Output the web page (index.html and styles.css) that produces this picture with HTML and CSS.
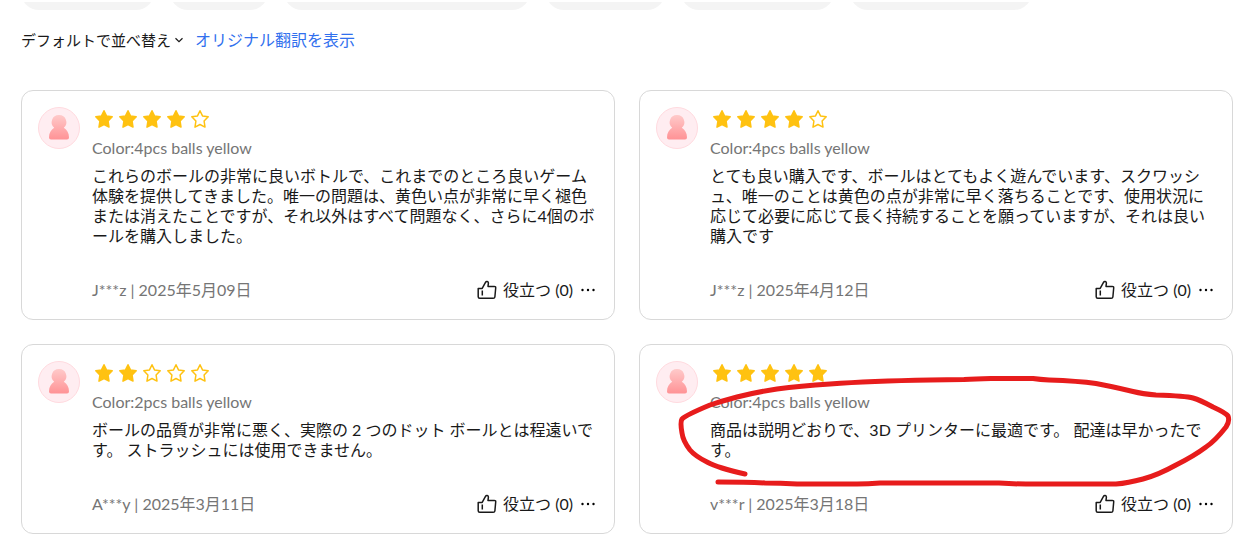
FILE: index.html
```html
<!DOCTYPE html>
<html lang="ja">
<head>
<meta charset="utf-8">
<meta name="viewport" content="width=device-width, initial-scale=1">
<title>レビュー</title>
<link rel="stylesheet" href="styles.css">
</head>
<body>
<svg class="symbols" width="0" height="0">
  <defs>
    <linearGradient id="person-fill" x1="0" y1="0" x2="0" y2="1">
      <stop offset="0" stop-color="#ffcaca"/>
      <stop offset="1" stop-color="#ff9295"/>
    </linearGradient>
    <symbol id="avatar" viewBox="0 0 42 42">
      <circle cx="21" cy="21" r="20.5" fill="#ffedf1" stroke="#ffdadf"/>
      <path d="M21 8a7.200 7.200 0 0 1 4.800 12.700C29 22.500 31 26 31 30.500Q31 32.600 29 32.600H13Q11 32.600 11 30.500C11 26 13 22.500 16.200 20.700A7.200 7.200 0 0 1 21 8z" fill="url(#person-fill)"/>
    </symbol>
    <symbol id="star" viewBox="0 0 24 24">
      <path d="M12 3.700l2.500 5.200 5.700.9-4.100 4.200.9 6.100L12 17.500l-5 2.600.9-6.100L3.800 9.800l5.700-.9z" stroke-width="1.500" stroke-linejoin="round" stroke="#ffc211"/>
    </symbol>
    <symbol id="thumb" viewBox="0 0 20 20">
      <path d="M1.200 8.400H5.200L8.500 2.400C9.300.9 11.400 1.400 11.400 3.100L11 6.400H17.300Q18.900 6.400 18.700 8L17.900 16.800Q17.700 18.300 16.200 18.300H2.700Q1.200 18.300 1.200 16.800ZM5.300 10.400V15.600" fill="none" stroke="#191919" stroke-width="1.500" stroke-linejoin="round"/>
    </symbol>
    <symbol id="dots" viewBox="0 0 16 16">
      <circle cx="2.500" cy="8" r="1.200"/><circle cx="8" cy="8" r="1.200"/><circle cx="13.500" cy="8" r="1.200"/>
    </symbol>
  </defs>
</svg>

<div class="chips">
  <span class="chip chip-a"></span>
  <span class="chip chip-b"></span>
  <span class="chip chip-c"></span>
  <span class="chip chip-d"></span>
  <span class="chip chip-e"></span>
  <span class="chip chip-f"></span>
</div>

<main class="reviews">
  <div class="toolbar">
    <button class="sort" type="button">デフォルトで並べ替え
      <svg class="chevron" viewBox="0 0 10 10"><path d="M1.500 3.300L5 6.700l3.500-3.400" fill="none" stroke="#191919" stroke-width="1.200"/></svg>
    </button>
    <a class="original" href="#">オリジナル翻訳を表示</a>
  </div>

  <div class="grid">
    <article class="card">
      <svg class="avatar"><use href="#avatar"/></svg>
      <div class="content">
        <div class="stars">
          <svg class="star on"><use href="#star"/></svg><svg class="star on"><use href="#star"/></svg><svg class="star on"><use href="#star"/></svg><svg class="star on"><use href="#star"/></svg><svg class="star"><use href="#star"/></svg>
        </div>
        <div class="variant">Color:4pcs balls yellow</div>
        <p class="text">これらのボールの非常に良いボトルで、これまでのところ良いゲーム体験を提供してきました。唯一の問題は、黄色い点が非常に早く褪色または消えたことですが、それ以外はすべて問題なく、さらに4個のボールを購入しました。</p>
        <footer class="foot">
          <span class="author">J***z | 2025年5月09日</span>
          <button class="helpful" type="button"><svg class="thumb"><use href="#thumb"/></svg>役立つ (0)</button>
          <button class="more" type="button"><svg class="dots"><use href="#dots"/></svg></button>
        </footer>
      </div>
    </article>

    <article class="card">
      <svg class="avatar"><use href="#avatar"/></svg>
      <div class="content">
        <div class="stars">
          <svg class="star on"><use href="#star"/></svg><svg class="star on"><use href="#star"/></svg><svg class="star on"><use href="#star"/></svg><svg class="star on"><use href="#star"/></svg><svg class="star"><use href="#star"/></svg>
        </div>
        <div class="variant">Color:4pcs balls yellow</div>
        <p class="text">とても良い購入です、ボールはとてもよく遊んでいます、スクワッシュ、唯一のことは黄色の点が非常に早く落ちることです、使用状況に応じて必要に応じて長く持続することを願っていますが、それは良い購入です</p>
        <footer class="foot">
          <span class="author">J***z | 2025年4月12日</span>
          <button class="helpful" type="button"><svg class="thumb"><use href="#thumb"/></svg>役立つ (0)</button>
          <button class="more" type="button"><svg class="dots"><use href="#dots"/></svg></button>
        </footer>
      </div>
    </article>

    <article class="card">
      <svg class="avatar"><use href="#avatar"/></svg>
      <div class="content">
        <div class="stars">
          <svg class="star on"><use href="#star"/></svg><svg class="star on"><use href="#star"/></svg><svg class="star"><use href="#star"/></svg><svg class="star"><use href="#star"/></svg><svg class="star"><use href="#star"/></svg>
        </div>
        <div class="variant">Color:2pcs balls yellow</div>
        <p class="text">ボールの品質が非常に悪く、実際の 2 つのドット ボールとは程遠いです。 ストラッシュには使用できません。</p>
        <footer class="foot">
          <span class="author">A***y | 2025年3月11日</span>
          <button class="helpful" type="button"><svg class="thumb"><use href="#thumb"/></svg>役立つ (0)</button>
          <button class="more" type="button"><svg class="dots"><use href="#dots"/></svg></button>
        </footer>
      </div>
    </article>

    <article class="card">
      <svg class="avatar"><use href="#avatar"/></svg>
      <div class="content">
        <div class="stars">
          <svg class="star on"><use href="#star"/></svg><svg class="star on"><use href="#star"/></svg><svg class="star on"><use href="#star"/></svg><svg class="star on"><use href="#star"/></svg><svg class="star on"><use href="#star"/></svg>
        </div>
        <div class="variant">Color:4pcs balls yellow</div>
        <p class="text">商品は説明どおりで、3D プリンターに最適です。 配達は早かったです。</p>
        <footer class="foot">
          <span class="author">v***r | 2025年3月18日</span>
          <button class="helpful" type="button"><svg class="thumb"><use href="#thumb"/></svg>役立つ (0)</button>
          <button class="more" type="button"><svg class="dots"><use href="#dots"/></svg></button>
        </footer>
      </div>
      <svg class="ink" viewBox="639 344 594 190">
        <path d="M745 474Q718 468 707 462Q695 456 690 450Q683 441 682 433Q680 422 682 419Q686 415 710 405Q722 401 737 397Q757 392 777 389Q800 386 830 384Q870 381 930 380L964 379.500Q975 379 991 378.500L1033 378.500Q1040 379.500 1049 380Q1078 381 1096 383.500Q1110 386 1133 391.500Q1143 394 1156 395Q1186 396 1193 398Q1200 400 1213 407Q1226 413 1228 416Q1230 421 1226 427Q1215 441 1206 447Q1194 456 1176 465Q1158 475 1143 479Q1128 483 1116 484L1026 484Q1014 484 999 483L880 483Q868 484 857 484L797 484Q780 483 765 483Q747 482 718 482"/>
      </svg>
    </article>
  </div>
</main>
</body>
</html>
```
FILE: styles.css
```css
* {
  box-sizing: border-box;
}

body {
  margin: 0;
  padding-top: 2px;
  background: #fff;
  color: #191919;
  font: 16px/20px Lato, "Noto Sans CJK JP", sans-serif;
}

button {
  padding: 0;
  border: 0;
  background: none;
  color: inherit;
  font: inherit;
  cursor: pointer;
}

svg {
  display: block;
  flex: none;
}

.symbols {
  position: absolute;
}

.chips {
  display: flex;
  align-items: flex-end;
  gap: 16px;
  height: 8px;
  padding-left: 21px;
  overflow: hidden;
}

.chip {
  flex: none;
  height: 36px;
  border-radius: 18px;
  background: #f4f4f4;
}

.chip-a { width: 133px; }
.chip-b { width: 98px; }
.chip-c { width: 246px; }
.chip-d { width: 119px; }
.chip-e { width: 153px; }
.chip-f { width: 182px; }

.reviews {
  padding: 20px 3px 0 21px;
}

.toolbar {
  display: flex;
  align-items: center;
  gap: 11px;
  margin-bottom: 40px;
}

.sort {
  display: flex;
  align-items: center;
  gap: 3px;
  font-size: 15px;
}

.chevron {
  width: 10px;
  height: 10px;
}

.original {
  color: #3170ee;
  text-decoration: none;
}

.grid {
  display: grid;
  grid-template-columns: 1fr 1fr;
  gap: 24px;
}

.card {
  position: relative;
  display: flex;
  gap: 12px;
  padding: 16px;
  border: 1px solid #d8d8d8;
  border-radius: 12px;
}

.avatar {
  width: 42px;
  height: 42px;
}

.content {
  flex: 1;
  min-width: 0;
}

.stars {
  display: flex;
}

.star {
  width: 24px;
  height: 24px;
  fill: none;
}

.star.on {
  fill: #ffc211;
}

.variant {
  margin-top: 7px;
  color: #757575;
}

.text {
  margin: 8px 0 34px;
}

.foot {
  display: flex;
  align-items: center;
  height: 20px;
  margin-bottom: 3px;
}

.author {
  margin-right: auto;
  color: #757575;
}

.helpful {
  display: flex;
  align-items: center;
  gap: 6px;
}

.thumb {
  width: 20px;
  height: 20px;
}

.more {
  margin: 0 2px 0 7px;
}

.dots {
  width: 16px;
  height: 16px;
}

.ink {
  position: absolute;
  top: -1px;
  left: -1px;
  width: calc(100% + 2px);
  overflow: visible;
  fill: none;
  stroke: #e71c1c;
  stroke-width: 5px;
  stroke-linecap: round;
  stroke-linejoin: round;
  pointer-events: none;
}
```
